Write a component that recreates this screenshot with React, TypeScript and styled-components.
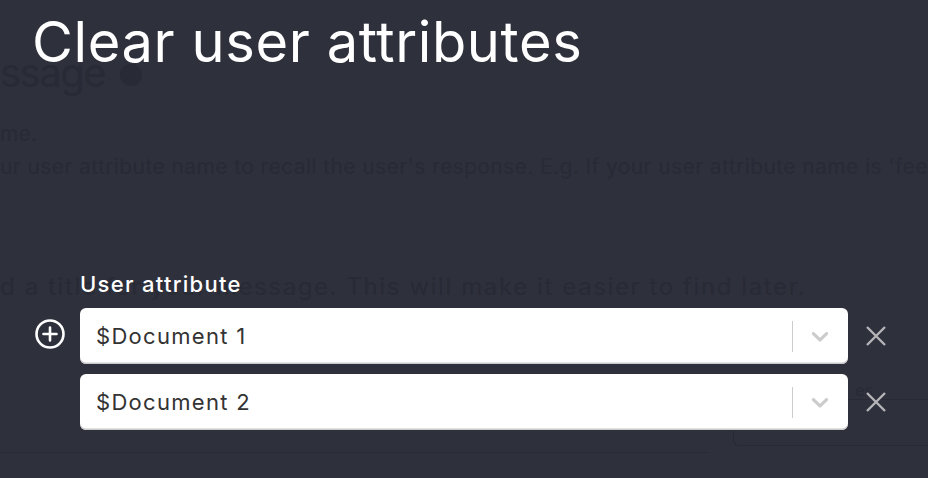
import React from 'react'
import styled, { createGlobalStyle } from 'styled-components'

const GlobalStyle = createGlobalStyle`
  html, body {
    margin: 0;
    padding: 0;
    background: #2e303c;
    overflow: hidden;
  }
  * {
    box-sizing: border-box;
  }
`

const FONT = `Inter, 'Open Sans', 'Liberation Sans', sans-serif`

const Screen = styled.div`
  position: relative;
  width: 928px;
  height: 478px;
  overflow: hidden;
  background: #2e303c;
  font-family: ${FONT};
`

// the page that sits under the dark overlay, barely visible
const GhostPage = styled.div`
  position: absolute;
  inset: 0;
  color: #282a35;
  white-space: nowrap;
  display: flex;
  flex-direction: column;
`

const GhostHeading = styled.div`
  display: flex;
  align-items: center;
  gap: 15px;
  margin-top: 50px;
  font-size: 40px;
  line-height: 46px;
  letter-spacing: -1.5px;
`

const GhostHelp = styled.span`
  width: 22px;
  height: 22px;
  border-radius: 50%;
  background: #282a35;
  margin-top: 4px;
`

const GhostText = styled.div<{ size: number; top: number; spacing: number }>`
  font-size: ${({ size }) => size}px;
  line-height: ${({ size }) => size + 6}px;
  margin-top: ${({ top }) => top}px;
  letter-spacing: ${({ spacing }) => spacing}px;
`

const GhostBottom = styled.div`
  margin-top: auto;
  margin-bottom: 25px;
  display: flex;
  align-items: flex-end;
  height: 60px;
`

const GhostRule = styled.div`
  width: 708px;
  border-bottom: 1px solid #282a35;
`

const GhostField = styled.div`
  position: relative;
  margin-left: 25px;
  margin-bottom: 7px;
  flex: 1;
  height: 47px;
  border: 1px solid #282a35;
  border-right: none;
  border-radius: 6px 0 0 6px;
`

const GhostFieldLabel = styled.span`
  position: absolute;
  left: 121px;
  top: -20px;
  font-size: 16px;
`

const Overlay = styled.div`
  position: absolute;
  inset: 0;
  padding: 8px 0 0 32px;
  display: flex;
  flex-direction: column;
`

const Title = styled.h1`
  margin: 0;
  font-family: ${FONT};
  font-size: 56px;
  font-weight: 400;
  line-height: 68px;
  color: #ffffff;
  letter-spacing: 0.6px;
`

const FieldGrid = styled.div`
  margin-top: 196px;
  display: grid;
  grid-template-columns: 48px 768px 56px;
  row-gap: 10px;
  align-items: center;
`

const Label = styled.label`
  grid-column: 2;
  color: #ffffff;
  font-size: 22px;
  font-weight: 500;
  line-height: 24px;
  letter-spacing: 1.3px;
  margin-bottom: 2px;
`

const AddButton = styled.button`
  grid-column: 1;
  justify-self: start;
  margin: 0 0 5px 2px;
  width: 32px;
  height: 32px;
  padding: 0;
  border: none;
  background: transparent;
  display: flex;
  align-items: center;
  justify-content: center;
  cursor: pointer;
`

const Select = styled.div`
  grid-column: 2;
  height: 56px;
  background: #ffffff;
  border-radius: 6px;
  box-shadow: inset 0 -1.5px 0 #c9c9c9;
  display: flex;
  align-items: center;
  padding-left: 16px;
`

const Value = styled.div`
  flex: 1;
  font-size: 22px;
  color: #333333;
  letter-spacing: 1.3px;
`

const Separator = styled.span`
  width: 1.5px;
  height: 31px;
  background: #cccccc;
`

const Indicator = styled.span`
  display: flex;
  align-items: center;
  padding: 0 14px 0 13px;
`

const RemoveButton = styled.button`
  grid-column: 3;
  justify-self: center;
  width: 32px;
  height: 32px;
  padding: 0;
  border: none;
  background: transparent;
  display: flex;
  align-items: center;
  justify-content: center;
  cursor: pointer;
`

const PlusCircle = () => (
  <svg width="32" height="32" viewBox="0 0 32 32" fill="none">
    <circle cx="16" cy="16" r="13.5" stroke="#fff" strokeWidth="2.6" />
    <path d="M16 9.5v13M9.5 16h13" stroke="#fff" strokeWidth="2.6" strokeLinecap="round" />
  </svg>
)

const Chevron = () => (
  <svg width="28" height="28" viewBox="0 0 20 20" fill="#cccccc">
    <path d="M4.516 7.548c0.436-0.446 1.043-0.481 1.576 0l3.908 3.747 3.908-3.747c0.533-0.481 1.141-0.446 1.574 0 0.436 0.445 0.408 1.197 0 1.615-0.406 0.418-4.695 4.502-4.695 4.502-0.217 0.223-0.502 0.335-0.787 0.335s-0.57-0.112-0.789-0.335c0 0-4.287-4.084-4.695-4.502s-0.436-1.17 0-1.615z" />
  </svg>
)

const Cross = () => (
  <svg width="22" height="22" viewBox="0 0 22 22" fill="none">
    <path d="M2 2l18 18M20 2L2 20" stroke="#b5b5b8" strokeWidth="2.4" />
  </svg>
)

const attributes = ['$Document 1', '$Document 2']

export default function App() {
  return (
    <Screen>
      <GlobalStyle />
      <GhostPage aria-hidden="true">
        <GhostHeading>
          <span>ssage</span>
          <GhostHelp />
        </GhostHeading>
        <GhostText size={21} top={24} spacing={0}>me.</GhostText>
        <GhostText size={21} top={6} spacing={0.4}>
          ur user attribute name to recall the user's response. E.g. If your user attribute name is 'fee
        </GhostText>
        <GhostText size={24} top={92} spacing={1.6}>
          d a title for your message. This will make it easier to find later.
        </GhostText>
        <GhostBottom>
          <GhostRule />
          <GhostField>
            <GhostFieldLabel>es</GhostFieldLabel>
          </GhostField>
        </GhostBottom>
      </GhostPage>

      <Overlay>
        <Title>Clear user attributes</Title>
        <FieldGrid>
          <Label>User attribute</Label>
          {attributes.map((name, i) => (
            <React.Fragment key={name}>
              {i === 0 && (
                <AddButton aria-label="Add attribute">
                  <PlusCircle />
                </AddButton>
              )}
              <Select>
                <Value>{name}</Value>
                <Separator />
                <Indicator>
                  <Chevron />
                </Indicator>
              </Select>
              <RemoveButton aria-label="Remove attribute">
                <Cross />
              </RemoveButton>
            </React.Fragment>
          ))}
        </FieldGrid>
      </Overlay>
    </Screen>
  )
}
